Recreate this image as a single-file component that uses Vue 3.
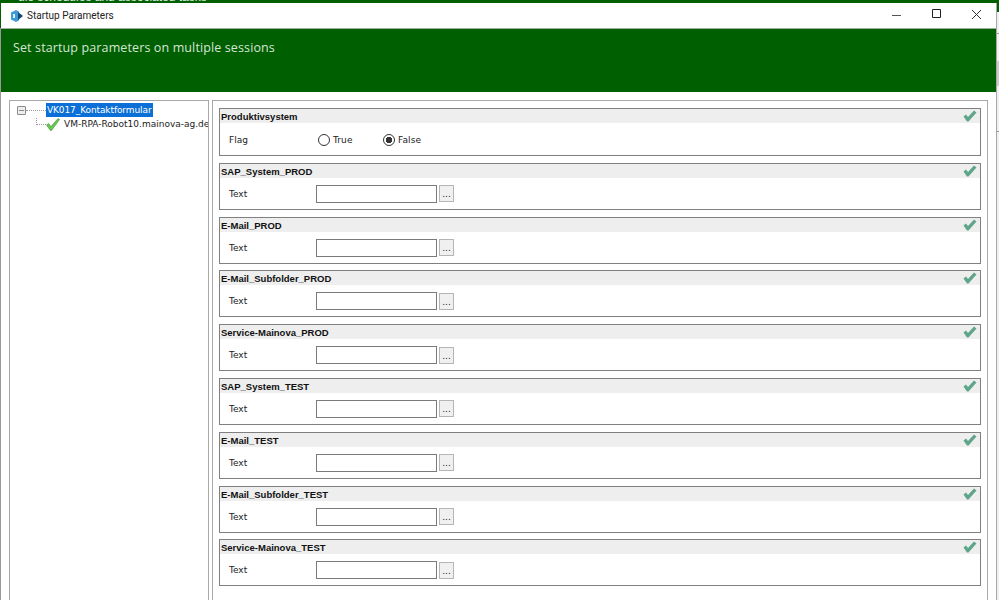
<script setup>
const textParams = [
  "SAP_System_PROD",
  "E-Mail_PROD",
  "E-Mail_Subfolder_PROD",
  "Service-Mainova_PROD",
  "SAP_System_TEST",
  "E-Mail_TEST",
  "E-Mail_Subfolder_TEST",
  "Service-Mainova_TEST",
];
</script>

<template>
  <div class="screen">
    <div class="behind-top"><span>ule schedules and associated tasks</span></div>
    <div class="stage">
      <div class="behind-left"></div>
      <div class="window">
        <header class="titlebar">
          <svg class="app-icon" width="14" height="14" viewBox="0 0 14 14">
            <path d="M1 3.500 6 1l3 1.500v9L6 13l-5-2.500z" fill="#3f9ad8" />
            <path d="M3 5h2v4H3z" fill="#d8ecf8" />
            <path d="M8 3l5 4-5 4z" fill="#17476f" />
          </svg>
          <span class="title">Startup Parameters</span>
          <div class="controls">
            <svg width="40" height="25" viewBox="0 0 40 25"><path d="M16 12.500h9" stroke="#555" fill="none" /></svg>
            <svg width="40" height="25" viewBox="0 0 40 25"><path d="M16.500 10.500h8v8h-8z" transform="translate(0 -4)" stroke="#222" fill="none" /></svg>
            <svg width="40" height="25" viewBox="0 0 40 25"><path d="M16 10l9 9M25 10l-9 9" transform="translate(0 -3)" stroke="#333" fill="none" /></svg>
          </div>
        </header>
        <div class="banner">Set startup parameters on multiple sessions</div>
        <div class="content">
          <aside class="tree">
            <div class="tree-row root">
              <span class="expander"></span>
              <span class="dots-h"></span>
              <span class="selected">VK017_Kontaktformular</span>
            </div>
            <div class="tree-row child">
              <span class="elbow"></span>
              <svg class="ok" width="14" height="13" viewBox="0 0 14 13">
                <path d="M0.500 7 2.500 5.500 5 8.500 12 .5l1.500 1L5.500 12.500H4.500z" fill="#66c84e" stroke="#3f8f3a" stroke-width=".6" />
              </svg>
              <span class="host">VM-RPA-Robot10.mainova-ag.de</span>
            </div>
          </aside>
          <main class="params">
            <section class="card first">
              <div class="card-head">
                <span>Produktivsystem</span>
                <svg class="tick" width="14" height="12" viewBox="0 0 14 12"><path d="M0.500 6.500 3 4.500l2 2.500L11 .5l2.500 2L5.500 11.500h-1.500z" fill="#5fa58a" /></svg>
              </div>
              <div class="card-body flag-body">
                <span class="field-label">Flag</span>
                <label class="radio"><i class="dot"></i>True</label>
                <label class="radio"><i class="dot on"></i>False</label>
              </div>
            </section>
            <section v-for="name in textParams" :key="name" class="card">
              <div class="card-head">
                <span>{{ name }}</span>
                <svg class="tick" width="14" height="12" viewBox="0 0 14 12"><path d="M0.500 6.500 3 4.500l2 2.500L11 .5l2.500 2L5.500 11.500h-1.500z" fill="#5fa58a" /></svg>
              </div>
              <div class="card-body">
                <span class="field-label">Text</span>
                <span class="input"></span>
                <span class="browse">...</span>
              </div>
            </section>
          </main>
        </div>
      </div>
      <div class="behind-right">
        <i class="seg-green"></i>
        <i class="seg-line"></i>
        <i class="seg-band"></i>
        <i class="seg-line low"></i>
      </div>
    </div>
  </div>
</template>

<style>
html,
body {
  margin: 0;
  background: #fff;
}
</style>

<style scoped>
.screen {
  width: 999px;
  height: 600px;
  display: flex;
  flex-direction: column;
  overflow: hidden;
  font-family: "DejaVu Sans", sans-serif;
  color: #111;
}
.behind-top {
  height: 3px;
  flex: none;
  background: #005f00;
  overflow: hidden;
  color: #dfe8df;
  font-family: "Liberation Sans", sans-serif;
  font-size: 12px;
  line-height: 12px;
}
.behind-top span {
  display: block;
  margin: -9px 0 0 18px;
}
.stage {
  flex: 1;
  display: flex;
  min-height: 0;
}
.behind-left {
  width: 1px;
  background: linear-gradient(#005f00 0 25px, #999 25px);
}
.behind-right {
  width: 3px;
  background: #f0f0f0;
  display: flex;
  flex-direction: column;
  border-left: 1px solid #a8a8a8;
  box-sizing: border-box;
}
.behind-right i {
  display: block;
}
.seg-green {
  height: 9px;
  background: #005f00;
}
.seg-line {
  height: 1px;
  margin-top: 21px;
  background: #999;
}
.seg-band {
  height: 25px;
  margin-top: 27px;
  background: #ccc;
}
.seg-line.low {
  margin-top: 45px;
}
.window {
  flex: 1;
  display: flex;
  flex-direction: column;
  background: #fff;
  min-width: 0;
}
.titlebar {
  height: 25px;
  flex: none;
  display: flex;
  align-items: center;
  padding-left: 9px;
  background: #fff;
  border-bottom: 1px solid #9fb09f;
}
.app-icon {
  margin-right: 3px;
}
.title {
  font-family: Roboto, sans-serif;
  font-size: 10px;
  color: #222;
}
.controls {
  margin-left: auto;
  display: flex;
}
.banner {
  height: 63px;
  flex: none;
  box-sizing: border-box;
  padding: 11px 12px 0;
  background: #005f00;
  color: #d6e6d6;
  font-family: "Open Sans", sans-serif;
  font-size: 12.500px;
  line-height: 16px;
  letter-spacing: 0.12px;
}
.content {
  flex: 1;
  min-height: 0;
  display: flex;
  gap: 3px;
  padding: 8px 8px 0 8px;
}
.tree {
  width: 200px;
  flex: none;
  box-sizing: border-box;
  border: 1px solid #a8a8a8;
  border-bottom: 0;
  overflow: hidden;
  font-size: 9px;
}
.tree-row {
  display: flex;
  align-items: center;
  white-space: nowrap;
}
.root {
  height: 14px;
  margin-top: 2px;
  padding-left: 7px;
}
.expander {
  width: 7px;
  height: 7px;
  border: 1px solid #8a8a8a;
  border-radius: 1px;
  background: linear-gradient(#8a8a8a, #8a8a8a) center / 5px 1px no-repeat #eee;
}
.dots-h {
  width: 20px;
  border-top: 1px dotted #999;
}
.selected {
  background: #0a6fd6;
  color: #fff;
  padding: 0 1px;
  line-height: 14px;
  letter-spacing: -0.1px;
}
.child {
  height: 14px;
  padding-left: 26px;
}
.elbow {
  width: 9px;
  height: 6px;
  flex: none;
  margin-top: -5px;
  border-left: 1px dotted #999;
  border-bottom: 1px dotted #999;
}
.ok {
  flex: none;
  margin-right: 4px;
}
.host {
  color: #222;
}
.params {
  flex: 1;
  min-width: 0;
  box-sizing: border-box;
  border: 1px solid #a8a8a8;
  border-bottom: 0;
  padding: 7px 6px 0 6px;
  display: flex;
  flex-direction: column;
  gap: 6.800px;
}
.card {
  height: 47px;
  flex: none;
  box-sizing: border-box;
  border: 1px solid #808080;
}
.card.first {
  height: 48px;
}
.card-head {
  height: 14px;
  box-sizing: border-box;
  padding: 1px 2px 0 1px;
  display: flex;
  justify-content: space-between;
  align-items: center;
  background: #eeeeee;
  font-family: "Liberation Sans", sans-serif;
  font-size: 9.500px;
  font-weight: 700;
  color: #111;
}
.tick {
  margin: -1px 1px 0 0;
}
.card-body {
  display: flex;
  align-items: center;
  box-sizing: border-box;
  height: 31px;
  padding-top: 1px;
  font-size: 9px;
  color: #222;
}
.field-label {
  width: 96px;
  flex: none;
  padding-left: 9px;
  box-sizing: border-box;
}
.flag-body {
  height: 32px;
}
.radio {
  display: flex;
  align-items: center;
  gap: 3px;
  width: 65px;
  margin-left: 2px;
  margin-right: -2px;
  font-size: 9px;
  letter-spacing: 0.1px;
}
.dot {
  width: 12px;
  height: 12px;
  box-sizing: border-box;
  border: 1.500px solid #333;
  border-radius: 50%;
  background: #fff;
}
.dot.on {
  background: radial-gradient(circle, #333 0 3px, #fff 3.500px);
}
.input {
  width: 121px;
  height: 18px;
  box-sizing: border-box;
  border: 1px solid #7a7a7a;
  background: #fff;
}
.browse {
  width: 15px;
  height: 17px;
  margin-left: 2px;
  box-sizing: border-box;
  border: 1px solid #b5b5b5;
  background: #f0f0f0;
  font-size: 9px;
  line-height: 16px;
  text-align: center;
  color: #222;
}
</style>
